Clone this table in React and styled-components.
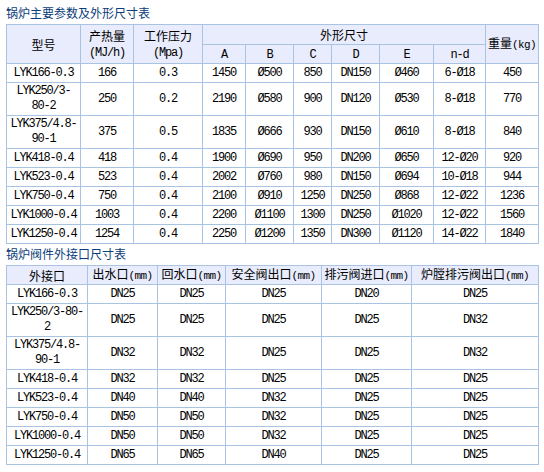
import React from "react";
import styled, { createGlobalStyle } from "styled-components";

const GlobalStyle = createGlobalStyle`
    html, body {
        margin: 0;
        padding: 0;
        background: #fff;
    }
    body {
        font-family: "Noto Sans CJK SC", sans-serif;
        font-size: 12px;
        color: #000;
    }
`;

const boilerRows = [
    ["LYK166-0.3", "166", "0.3", "1450", "Ø500", "850", "DN150", "Ø460", "6-Ø18", "450"],
    ["LYK250/3-\n80-2", "250", "0.2", "2190", "Ø580", "900", "DN120", "Ø530", "8-Ø18", "770"],
    ["LYK375/4.8-\n90-1", "375", "0.5", "1835", "Ø666", "930", "DN150", "Ø610", "8-Ø18", "840"],
    ["LYK418-0.4", "418", "0.4", "1900", "Ø690", "950", "DN200", "Ø650", "12-Ø20", "920"],
    ["LYK523-0.4", "523", "0.4", "2002", "Ø760", "980", "DN150", "Ø694", "10-Ø18", "944"],
    ["LYK750-0.4", "750", "0.4", "2100", "Ø910", "1250", "DN250", "Ø868", "12-Ø22", "1236"],
    ["LYK1000-0.4", "1003", "0.4", "2200", "Ø1100", "1300", "DN250", "Ø1020", "12-Ø22", "1560"],
    ["LYK1250-0.4", "1254", "0.4", "2250", "Ø1200", "1350", "DN300", "Ø1120", "14-Ø22", "1840"],
];

const valveRows = [
    ["LYK166-0.3", "DN25", "DN25", "DN25", "DN20", "DN25"],
    ["LYK250/3-80-\n2", "DN25", "DN25", "DN25", "DN25", "DN32"],
    ["LYK375/4.8-\n90-1", "DN32", "DN32", "DN25", "DN25", "DN32"],
    ["LYK418-0.4", "DN32", "DN32", "DN25", "DN25", "DN25"],
    ["LYK523-0.4", "DN40", "DN40", "DN32", "DN25", "DN25"],
    ["LYK750-0.4", "DN50", "DN50", "DN32", "DN25", "DN25"],
    ["LYK1000-0.4", "DN50", "DN50", "DN32", "DN25", "DN25"],
    ["LYK1250-0.4", "DN65", "DN65", "DN40", "DN25", "DN25"],
];

const boilerCols = [74, 53, 69, 43, 48, 38, 48, 54, 52, 53];
const valveCols = [81, 70, 68, 96, 90, 127];

const App = () => {
    return (
        <Page>
            <GlobalStyle />
            <Title>锅炉主要参数及外形尺寸表</Title>
            <Table>
                <colgroup>
                    {boilerCols.map((w, i) => (
                        <col key={i} style={{ width: w }} />
                    ))}
                </colgroup>
                <thead>
                    <tr>
                        <Head rowSpan={2} $h={19}>型号</Head>
                        <Head rowSpan={2} $h={19}>
                            产热量
                            <br />
                            <Latin $size={12}>(MJ/h)</Latin>
                        </Head>
                        <Head rowSpan={2} $h={19}>
                            工作压力
                            <br />
                            <Latin $size={12}>(Mpa)</Latin>
                        </Head>
                        <Head colSpan={6} $h={19}>外形尺寸</Head>
                        <Head rowSpan={2} $h={19}>
                            重量<Latin $size={11}>(kg)</Latin>
                        </Head>
                    </tr>
                    <tr>
                        {["A", "B", "C", "D", "E", "n-d"].map((l) => (
                            <Head key={l} $h={18}>
                                <Latin $size={12}>{l}</Latin>
                            </Head>
                        ))}
                    </tr>
                </thead>
                <tbody>
                    {boilerRows.map((row, i) => (
                        <tr key={i}>
                            {row.map((c, j) => (
                                <Cell key={j} $h={row[0].includes("\n") ? 32 : 18}>
                                    {c}
                                </Cell>
                            ))}
                        </tr>
                    ))}
                </tbody>
            </Table>
            <Title $second>锅炉阀件外接口尺寸表</Title>
            <Table>
                <colgroup>
                    {valveCols.map((w, i) => (
                        <col key={i} style={{ width: w }} />
                    ))}
                </colgroup>
                <thead>
                    <tr>
                        <Head $h={18}>外接口</Head>
                        {["出水口", "回水口", "安全阀出口", "排污阀进口", "炉膛排污阀出口"].map((t) => (
                            <Head key={t} $h={18}>
                                {t}
                                <Latin $size={11}>(mm)</Latin>
                            </Head>
                        ))}
                    </tr>
                </thead>
                <tbody>
                    {valveRows.map((row, i) => (
                        <tr key={i}>
                            {row.map((c, j) => (
                                <Cell key={j} $h={row[0].includes("\n") ? 32 : 18}>
                                    {c}
                                </Cell>
                            ))}
                        </tr>
                    ))}
                </tbody>
            </Table>
        </Page>
    );
};

export default App;

const Page = styled.div`
    width: 544px;
    padding: 0 0 0 6px;
    box-sizing: border-box;
`;

const Title = styled.div`
    height: ${(p) => (p.$second ? "21px" : "24px")};
    line-height: ${(p) => (p.$second ? "20px" : "26px")};
    color: #0b3d7a;
    font-size: 12px;
    white-space: nowrap;
`;

const Table = styled.table`
    border-collapse: collapse;
    table-layout: fixed;
    width: 533px;
    border: 1px solid #a9c4e2;
`;

const Head = styled.th`
    background: #e8ecfc;
    border: 1px solid #a9c4e2;
    font-weight: normal;
    font-size: 12px;
    line-height: 15px;
    height: ${(p) => p.$h}px;
    padding: 0;
    text-align: center;
    vertical-align: middle;
    white-space: nowrap;
`;

const Latin = styled.span`
    font-family: "Liberation Mono", monospace;
    font-size: ${(p) => p.$size}px;
    letter-spacing: ${(p) => 6 - p.$size * 0.6}px;
`;

const Cell = styled.td`
    border: 1px solid #a9c4e2;
    font-family: "Liberation Mono", "Noto Sans CJK SC", monospace;
    font-size: 12px;
    letter-spacing: -1.2px;
    line-height: 15px;
    height: ${(p) => p.$h}px;
    padding: 0;
    text-align: center;
    vertical-align: middle;
    white-space: pre-line;
`;
